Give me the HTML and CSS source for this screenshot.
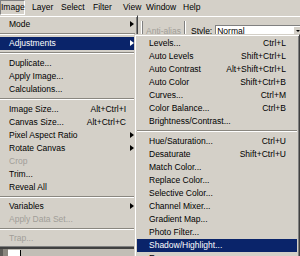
FILE: index.html
```html
<!DOCTYPE html>
<html lang="en">
<head>
  <meta charset="UTF-8">
  <title>Image menu</title>
  <link rel="stylesheet" href="styles.css">
</head>
<body>
  <div class="menubar">
    <span class="top-item"><span class="pressed">Image</span></span>
    <span class="top-item">Layer</span>
    <span class="top-item">Select</span>
    <span class="top-item">Filter</span>
    <span class="top-item">View</span>
    <span class="top-item">Window</span>
    <span class="top-item">Help</span>
  </div>

  <div class="optionsbar">
    <div class="grip"></div>
    <span class="opt-disabled">Anti-alias</span>
    <div class="opt-sep"></div>
    <span class="opt-label">Style:</span>
    <div class="select-box">
      <span class="select-value">Normal</span>
      <span class="select-btn"><span class="down"></span></span>
    </div>
  </div>

  <div class="docstrip">
    <div class="doc-dark"></div>
    <div class="doc-white"></div>
  </div>

  <div class="menu main-menu">
    <div class="item has-sub"><span class="label">Mode</span></div>
    <div class="sep thin"></div>
    <div class="item has-sub active"><span class="label">Adjustments</span></div>
    <div class="sep"></div>
    <div class="item"><span class="label">Duplicate...</span></div>
    <div class="item"><span class="label">Apply Image...</span></div>
    <div class="item"><span class="label">Calculations...</span></div>
    <div class="sep"></div>
    <div class="item"><span class="label">Image Size...</span><span class="key">Alt+Ctrl+I</span></div>
    <div class="item"><span class="label">Canvas Size...</span><span class="key">Alt+Ctrl+C</span></div>
    <div class="item has-sub"><span class="label">Pixel Aspect Ratio</span></div>
    <div class="item has-sub"><span class="label">Rotate Canvas</span></div>
    <div class="item disabled"><span class="label">Crop</span></div>
    <div class="item"><span class="label">Trim...</span></div>
    <div class="item"><span class="label">Reveal All</span></div>
    <div class="sep thin"></div>
    <div class="item has-sub"><span class="label">Variables</span></div>
    <div class="item disabled"><span class="label">Apply Data Set...</span></div>
    <div class="sep thin"></div>
    <div class="item disabled"><span class="label">Trap...</span></div>
  </div>

  <div class="menu sub-menu">
    <div class="item"><span class="label">Levels...</span><span class="key">Ctrl+L</span></div>
    <div class="item"><span class="label">Auto Levels</span><span class="key">Shift+Ctrl+L</span></div>
    <div class="item"><span class="label">Auto Contrast</span><span class="key">Alt+Shift+Ctrl+L</span></div>
    <div class="item"><span class="label">Auto Color</span><span class="key">Shift+Ctrl+B</span></div>
    <div class="item"><span class="label">Curves...</span><span class="key">Ctrl+M</span></div>
    <div class="item"><span class="label">Color Balance...</span><span class="key">Ctrl+B</span></div>
    <div class="item"><span class="label">Brightness/Contrast...</span></div>
    <div class="sep"></div>
    <div class="item"><span class="label">Hue/Saturation...</span><span class="key">Ctrl+U</span></div>
    <div class="item"><span class="label">Desaturate</span><span class="key">Shift+Ctrl+U</span></div>
    <div class="item"><span class="label">Match Color...</span></div>
    <div class="item"><span class="label">Replace Color...</span></div>
    <div class="item"><span class="label">Selective Color...</span></div>
    <div class="item"><span class="label">Channel Mixer...</span></div>
    <div class="item"><span class="label">Gradient Map...</span></div>
    <div class="item"><span class="label">Photo Filter...</span></div>
    <div class="item active"><span class="label">Shadow/Highlight...</span></div>
    <div class="item"><span class="label">Exposure...</span></div>
  </div>
</body>
</html>
```

FILE: styles.css
```css
* {
  box-sizing: border-box;
  margin: 0;
  padding: 0;
}

body {
  width: 300px;
  height: 256px;
  overflow: hidden;
  position: relative;
  display: flex;
  flex-direction: column;
  background: #d4d0c8;
  color: #000;
  font-family: "Liberation Sans", Arial, sans-serif;
  font-size: 8.5px;
}

/* menu bar */
.menubar {
  height: 16px;
  display: grid;
  grid-template-columns: 32px 29px 32px 30px 23px 37px auto;
  line-height: 15px;
  white-space: nowrap;
}

.pressed {
  display: block;
  width: 25px;
  height: 15px;
  line-height: 13px;
  border: 1px solid;
  border-color: #808080 #fff #fff #808080;
}

/* options bar behind the menus */
.optionsbar {
  height: 28px;
  display: flex;
  align-items: center;
  padding-left: 141px;
  border-top: 1px solid #fff;
  white-space: nowrap;
}

.grip {
  width: 3px;
  height: 20px;
  border-left: 1px solid #fff;
  border-right: 1px solid #808080;
  margin-right: 3px;
}

.opt-disabled {
  color: #a19e98;
  margin-right: 3px;
}

.opt-sep {
  width: 2px;
  height: 20px;
  border-left: 1px solid #808080;
  border-right: 1px solid #fff;
  margin-right: 5px;
}

.opt-label {
  margin-right: 3px;
}

.select-box {
  display: flex;
  height: 11px;
  width: 90px;
  background: #fff;
  border-top: 1px solid #808080;
  border-left: 1px solid #808080;
}

.select-value {
  width: 78px;
  padding-left: 1px;
  line-height: 10px;
}

.select-btn {
  width: 12px;
  background: #d4d0c8;
  border: 1px solid;
  border-color: #fff #404040 #404040 #fff;
  display: flex;
  align-items: center;
  padding-left: 2px;
}

.down {
  border-top: 2px solid #000;
  border-left: 2px solid transparent;
  border-right: 2px solid transparent;
}

/* strip of the document window under the menu */
.docstrip {
  margin-top: auto;
  height: 8px;
  display: flex;
  border-top: 1px solid #404040;
  background: #c2beb6;
}

.doc-dark {
  width: 8px;
  background: #8a877f;
  border-left: 3px solid #5e5c58;
}

.doc-white {
  width: 13px;
  margin-top: 1px;
  background: #fff;
  border-right: 1px solid #000;
}

/* drop-down menus */
.menu {
  position: absolute;
  background: #d4d0c8;
  border: 1px solid;
  border-color: #d4d0c8 #404040 #404040 #d4d0c8;
  box-shadow: inset 1px 1px 0 #fff, inset -1px -1px 0 #808080;
  padding: 2px;
  white-space: nowrap;
}

.main-menu {
  left: -3px;
  top: 15px;
  width: 141px;
}

.sub-menu {
  left: 134px;
  top: 34px;
  width: 166px;
}

.item {
  position: relative;
  display: flex;
  height: 13px;
  line-height: 13px;
}

.main-menu .item {
  padding: 0 9px;
}

.sub-menu .item {
  padding: 0 11px 0 12px;
}

.label {
  flex: 1;
}

.has-sub::after {
  content: "";
  position: absolute;
  right: 1px;
  top: 3px;
  border-left: 4px solid #000;
  border-top: 3px solid transparent;
  border-bottom: 3px solid transparent;
}

.active {
  background: #0a246a;
  color: #fff;
}

.active.has-sub::after {
  border-left-color: #fff;
}

.disabled {
  color: #a19e98;
}

.sep {
  height: 0;
  margin: 2px 0 3px;
  border-top: 1px solid #8a8780;
  border-bottom: 1px solid #fff;
}

.sep.thin {
  margin-bottom: 2px;
}
```
